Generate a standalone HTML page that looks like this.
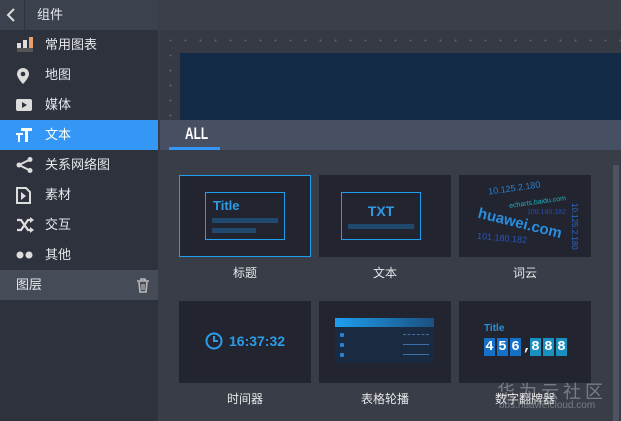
<!DOCTYPE html>
<html><head><meta charset="utf-8"><style>
*{margin:0;padding:0;box-sizing:border-box}
html,body{width:621px;height:421px;overflow:hidden}
body{background:#383d48;font-family:"Liberation Sans","Noto Sans CJK SC",sans-serif;color:#e6e8ec;position:relative}
.abs{position:absolute;white-space:nowrap}
.side{left:0;top:0;width:158px;height:421px;background:#2e323d}
.hdr{left:0;top:0;width:158px;height:30px;background:#3b414d}
.item{position:absolute;left:0;width:158px;height:30px;font-size:13px;line-height:30px;padding-left:45px}
.item svg{position:absolute;left:16px;top:7px}
.card{position:absolute;width:132px;height:82px;background:#22252f}
.lbl{position:absolute;width:132px;text-align:center;font-size:12px;color:#e8e8e8}
</style></head><body>
<div class="abs side"></div>
<div class="abs hdr"></div>
<div class="abs" style="left:24px;top:0;width:1px;height:30px;background:#2e323d"></div>
<svg class="abs" style="left:6px;top:8px" width="10" height="14"><path d="M8 1L2 7l6 6" stroke="#ddd" stroke-width="2" fill="none"/></svg>
<div class="abs" style="left:37px;top:0;line-height:30px;font-size:13px">组件</div>

<div class="item" style="top:30px"><svg width="18" height="16"><rect x="1" y="6" width="4" height="9" fill="#ddd"/><rect x="7" y="3" width="4" height="12" fill="#ddd"/><rect x="13" y="0" width="4" height="15" fill="#e8a070"/><rect x="1" y="11" width="16" height="4" fill="#555"/></svg>常用图表</div>
<div class="item" style="top:60px"><svg width="18" height="18"><path d="M7 1a6 6 0 0 1 6 6c0 4-6 10-6 10S1 11 1 7a6 6 0 0 1 6-6z" fill="#ddd"/><circle cx="7" cy="7" r="2.3" fill="#2e323d"/></svg>地图</div>
<div class="item" style="top:90px"><svg width="18" height="16"><rect x="0" y="2" width="16" height="12" rx="2" fill="#ddd"/><path d="M6 5l5 3-5 3z" fill="#2e323d"/></svg>媒体</div>
<div class="item" style="top:120px;background:#3496f5;color:#fff"><svg width="18" height="16"><rect x="5" y="1" width="11" height="3" fill="#fff"/><rect x="9" y="1" width="3" height="14" fill="#fff"/><rect x="0" y="6" width="7" height="2" fill="#fff"/><rect x="2" y="6" width="2" height="9" fill="#fff"/></svg>文本</div>
<div class="item" style="top:150px"><svg width="18" height="16"><circle cx="3" cy="8" r="2.5" fill="#ddd"/><circle cx="14" cy="2.5" r="2.5" fill="#ddd"/><circle cx="14" cy="13.5" r="2.5" fill="#ddd"/><path d="M3 8L14 2.5M3 8l11 5.5" stroke="#ddd" stroke-width="2"/></svg>关系网络图</div>
<div class="item" style="top:180px"><svg width="18" height="17"><path d="M1 1h9l4 4v11H1z" fill="none" stroke="#ddd" stroke-width="2"/><path d="M5 5l5 4-5 4z" fill="#ddd"/></svg>素材</div>
<div class="item" style="top:210px"><svg width="18" height="16"><path d="M1 3h4l7 10h4M1 13h4l7-10h4" stroke="#ddd" stroke-width="2.2" fill="none"/><path d="M14 0l4 3-4 3zM14 10l4 3-4 3z" fill="#ddd"/></svg>交互</div>
<div class="item" style="top:240px"><svg width="18" height="16"><circle cx="4" cy="8" r="3.5" fill="#ddd"/><circle cx="13" cy="8" r="3.5" fill="#ddd"/></svg>其他</div>
<div class="abs" style="left:0;top:270px;width:158px;height:30px;background:#454b57"></div>
<div class="abs" style="left:16px;top:270px;line-height:30px;font-size:13px">图层</div>
<svg class="abs" style="left:136px;top:278px" width="14" height="15"><path d="M1 3h12M5 3V1h4v2M3 4l1 10h6l1-10" stroke="#bbb" stroke-width="1.6" fill="none"/><path d="M6 6v6M8 6v6" stroke="#bbb" stroke-width="1.2"/></svg>

<div class="abs" style="left:158px;top:0;width:463px;height:30px;background:#3b3f48"></div>
<div class="abs" style="left:160px;top:30px;width:461px;height:90px;background:#353a44;background-image:radial-gradient(circle,#5a606b 0.8px,transparent 1.2px);background-size:15px 15px;background-position:3px 3px"></div>
<div class="abs" style="left:180px;top:53px;width:441px;height:67px;background:#132b46"></div>
<div class="abs" style="left:160px;top:120px;width:461px;height:30px;background:#475062"></div>
<div class="abs" style="left:185px;top:124px;font-size:17px;font-weight:bold;color:#fff;transform:scaleX(0.7);transform-origin:left">ALL</div>
<div class="abs" style="left:169px;top:147px;width:51px;height:3px;background:#3496f5"></div>
<div class="abs" style="left:613px;top:165px;width:6px;height:256px;background:#4d5361"></div>

<div class="card" style="left:179px;top:175px;border:1px solid #1e9ff0"></div>
<div class="abs" style="left:205px;top:192px;width:80px;height:48px;border:1px solid #1e9ff0"></div>
<div class="abs" style="left:213px;top:198px;font-size:13px;font-weight:bold;color:#2d9be6">Title</div>
<div class="abs" style="left:212px;top:218px;width:66px;height:5px;background:#1f4a6e"></div>
<div class="abs" style="left:212px;top:228px;width:44px;height:5px;background:#1f4a6e"></div>

<div class="card" style="left:319px;top:175px"></div>
<div class="abs" style="left:341px;top:192px;width:80px;height:48px;border:1px solid #1e9ff0"></div>
<div class="abs" style="left:341px;top:203px;width:80px;text-align:center;font-size:14px;font-weight:bold;color:#2d9be6">TXT</div>
<div class="abs" style="left:348px;top:224px;width:66px;height:5px;background:#1f4a6e"></div>

<div class="card" style="left:459px;top:175px;overflow:hidden">
<div class="abs" style="left:29px;top:8px;font-size:9px;color:#2a7fd0;transform:rotate(-8deg)">10.125.2.180</div>
<div class="abs" style="left:50px;top:24px;font-size:7px;color:#1fb0c0;transform:rotate(-8deg)">echarts.baidu.com</div>
<div class="abs" style="left:18px;top:40px;font-size:15px;font-weight:bold;color:#2a8ee0;transform:rotate(14deg)">huawei.com</div>
<div class="abs" style="left:18px;top:58px;font-size:9px;color:#2a56c0;transform:rotate(5deg)">101.180.182</div>
<div class="abs" style="left:68px;top:34px;font-size:7px;color:#2a4ab0">100.180.182</div>
<div class="abs" style="left:120px;top:28px;font-size:8px;color:#2a6ad0;transform:rotate(90deg);transform-origin:left top">10.125.2.180</div>
</div>

<div class="lbl" style="left:179px;top:264px">标题</div>
<div class="lbl" style="left:319px;top:264px">文本</div>
<div class="lbl" style="left:459px;top:264px">词云</div>

<div class="card" style="left:179px;top:301px"></div>
<svg class="abs" style="left:205px;top:332px" width="18" height="18"><circle cx="9" cy="9" r="7.5" stroke="#2d9be6" stroke-width="2" fill="none"/><path d="M9 4v5h4" stroke="#2d9be6" stroke-width="2" fill="none"/></svg>
<div class="abs" style="left:229px;top:333px;font-size:14px;font-weight:bold;color:#2d9be6">16:37:32</div>

<div class="card" style="left:319px;top:301px"></div>
<div class="abs" style="left:335px;top:318px;width:99px;height:9px;background:linear-gradient(90deg,#1e9ff0,#1c4f80)"></div>
<div class="abs" style="left:335px;top:327px;width:99px;height:36px;background:#1a2a40"></div>
<div class="abs" style="left:340px;top:333px;width:4px;height:4px;background:#2d7fd0;border-radius:1px;box-shadow:0 10px #2d7fd0,0 20px #2d7fd0"></div>
<div class="abs" style="left:403px;top:334px;width:26px;height:1px;border-top:1px dashed #3f6fa8;box-shadow:0 10px #3f6fa8,0 20px #3f6fa8"></div>

<div class="card" style="left:459px;top:301px"></div>
<div class="abs" style="left:484px;top:323px;font-size:10px;font-weight:bold;color:#2d8fd6">Title</div>
<div class="abs" style="left:484px;top:338px;display:flex;gap:2px;font-size:14px;line-height:18px;font-weight:bold;color:#fff;font-family:'Liberation Mono',monospace">
<span style="background:#1570c8;width:11px;text-align:center">4</span><span style="background:#1570c8;width:11px;text-align:center">5</span><span style="background:#1570c8;width:11px;text-align:center">6</span><span style="width:5px">,</span><span style="background:#1a90c0;width:11px;text-align:center">8</span><span style="background:#1a90c0;width:11px;text-align:center">8</span><span style="background:#1a90c0;width:11px;text-align:center">8</span></div>

<div class="lbl" style="left:179px;top:390px">时间器</div>
<div class="lbl" style="left:319px;top:390px">表格轮播</div>
<div class="abs" style="left:497px;top:378px;font-size:18px;color:rgba(200,200,200,0.45);letter-spacing:4px">华为云社区</div>
<div class="lbl" style="left:459px;top:390px">数字翻牌器</div>
<div class="abs" style="left:499px;top:400px;font-size:10px;color:rgba(200,200,200,0.45)">bbs.huaweicloud.com</div>
</body></html>
